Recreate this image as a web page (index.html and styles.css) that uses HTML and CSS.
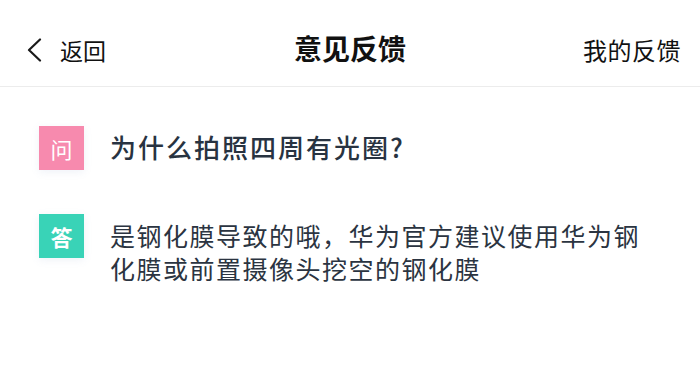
FILE: index.html
```html
<!DOCTYPE html>
<html lang="zh-CN">
<head>
<meta charset="utf-8">
<title>意见反馈</title>
<link rel="stylesheet" href="styles.css">
</head>
<body>
<div class="page">
  <header class="topbar">
    <div class="back">
      <svg class="chev" width="16" height="24" viewBox="0 0 16 24"><path d="M14 1.5 L3 12 L14 22.5" fill="none" stroke="#1a1a1a" stroke-width="2.2" stroke-linecap="round" stroke-linejoin="round"/></svg>
      <span class="back-text">返回</span>
    </div>
    <h1 class="title">意见反馈</h1>
    <div class="mine">我的反馈</div>
  </header>
  <main class="content">
    <div class="row q">
      <div class="badge pink">问</div>
      <div class="qtext">为什么拍照四周有光圈?</div>
    </div>
    <div class="row a">
      <div class="badge green">答</div>
      <div class="atext">是钢化膜导致的哦，华为官方建议使用华为钢化膜或前置摄像头挖空的钢化膜</div>
    </div>
  </main>
</div>
</body>
</html>
```
FILE: styles.css
```css
* { box-sizing: border-box; margin: 0; padding: 0; }
html, body { background: #fff; }
body {
  font-family: "Noto Sans CJK SC", "Noto Sans", sans-serif;
  color: #1a1a1a;
  width: 700px;
  height: 377px;
  overflow: hidden;
}
.topbar {
  height: 87px;
  border-bottom: 1px solid #ececec;
  display: flex;
  align-items: center;
  justify-content: space-between;
  padding: 10px 19px 0 26px;
  position: relative;
}
.back {
  display: flex;
  align-items: center;
  gap: 18px;
  padding-top: 4px;
}
.chev { display: block; }
.back-text { font-size: 23px; line-height: 30px; color: #111; }
.title {
  position: absolute;
  left: 0; right: 0;
  top: 30px;
  text-align: center;
  font-size: 28px;
  font-weight: 700;
  line-height: 36px;
  color: #111;
  pointer-events: none;
}
.mine { font-size: 24px; line-height: 30px; color: #111; padding-top: 4px; letter-spacing: 0.5px; }
.content { padding: 39px 0 0 39px; }
.row { display: flex; align-items: flex-start; }
.row.a { margin-top: 44px; }
.badge {
  width: 45px;
  height: 44px;
  flex: none;
  display: flex;
  align-items: center;
  justify-content: center;
  color: #fff;
  font-size: 22px;
  box-shadow: 0 2px 8px rgba(120, 150, 200, 0.12);
}
.pink { background: #f78aae; }
.green { background: #39d3b7; font-weight: 700; }
.qtext {
  margin-left: 26px;
  font-size: 26px;
  line-height: 42px;
  font-weight: 500;
  color: #283341;
  letter-spacing: 2px;
}
.atext {
  margin-left: 26px;
  margin-top: 5px;
  width: 540px;
  font-size: 25px;
  line-height: 33px;
  color: #2b3441;
  letter-spacing: 1.5px;
}
```
